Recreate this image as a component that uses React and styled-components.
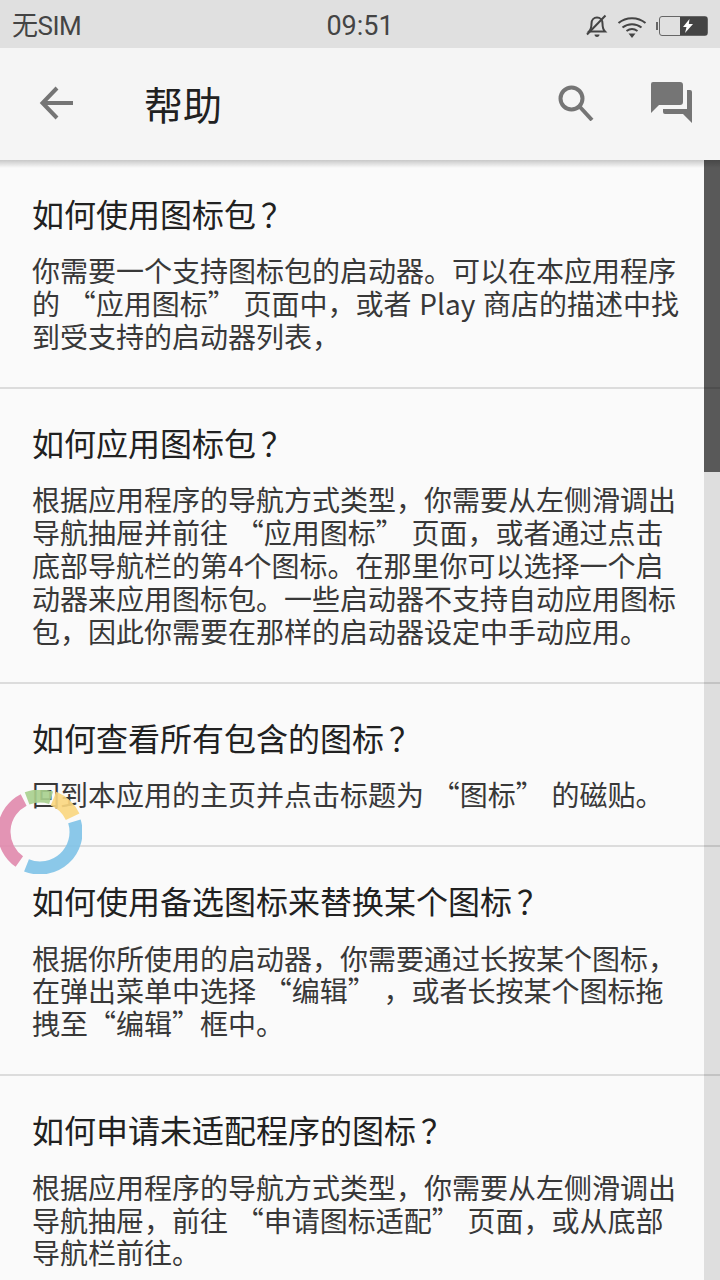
import React from "react";
import styled, { createGlobalStyle } from "styled-components";

const faqs = [
  {
    title: "如何使用图标包",
    lines: [
      "你需要一个支持图标包的启动器。可以在本应用程序",
      "的 “应用图标” 页面中，或者 Play 商店的描述中找",
      "到受支持的启动器列表，",
    ],
  },
  {
    title: "如何应用图标包",
    lines: [
      "根据应用程序的导航方式类型，你需要从左侧滑调出",
      "导航抽屉并前往 “应用图标” 页面，或者通过点击",
      "底部导航栏的第4个图标。在那里你可以选择一个启",
      "动器来应用图标包。一些启动器不支持自动应用图标",
      "包，因此你需要在那样的启动器设定中手动应用。",
    ],
  },
  {
    title: "如何查看所有包含的图标",
    lines: ["回到本应用的主页并点击标题为 “图标” 的磁贴。"],
  },
  {
    title: "如何使用备选图标来替换某个图标",
    lines: [
      "根据你所使用的启动器，你需要通过长按某个图标，",
      "在弹出菜单中选择 “编辑” ，或者长按某个图标拖",
      "拽至“编辑”框中。",
    ],
  },
  {
    title: "如何申请未适配程序的图标",
    lines: [
      "根据应用程序的导航方式类型，你需要从左侧滑调出",
      "导航抽屉，前往 “申请图标适配” 页面，或从底部",
      "导航栏前往。",
    ],
  },
];

// ring segments, angles clockwise from 12 o'clock
const ringArcs = [
  { from: 215, to: 333, color: "#e189ad", width: 13 },
  { from: 339, to: 378, color: "#a9d08e", width: 13 },
  { from: 382, to: 425, color: "#fbd77f", width: 15 },
  { from: 433, to: 562, color: "#7fc3e8", width: 13 },
];

function arcPath(from, to) {
  const point = (deg) => {
    const rad = (deg * Math.PI) / 180;
    return `${(42 + 36 * Math.sin(rad)).toFixed(2)} ${(42 - 36 * Math.cos(rad)).toFixed(2)}`;
  };
  return `M${point(from)}A36 36 0 ${to - from > 180 ? 1 : 0} 1 ${point(to)}`;
}

export default function App() {
  return (
    <Screen lang="zh-CN">
      <GlobalStyle />
      <StatusBar>
        <Carrier>无SIM</Carrier>
        <Clock>09:51</Clock>
        <StatusIcons>
          <svg width="22" height="24" viewBox="0 0 22 24" fill="none" stroke="#444" strokeWidth="2">
            <path d="M3 17.500c2-2 2.500-3.500 2.500-8 0-3.500 2.300-6 5.500-6s5.500 2.500 5.500 6c0 4.500.5 6 2.500 8z" />
            <path d="M8.500 20.500h5c0 1.500-1 2.500-2.500 2.500s-2.500-1-2.500-2.500z" fill="#444" stroke="none" />
            <path d="M1 20.500 19.500 1.500" strokeWidth="2" />
          </svg>
          <svg width="30" height="24" viewBox="0 0 30 24" fill="none" stroke="#444" strokeWidth="2">
            <path d="M1.500 9C9 2.500 21 2.500 28.500 9" />
            <path d="M5.500 13.500c5.500-4.500 13.500-4.500 19 0" />
            <path d="M9.500 17c3.300-2.400 7.700-2.400 11 0" />
            <path d="M11.500 19.500h7L15 24z" fill="#444" stroke="none" />
          </svg>
          <BatteryCap />
          <Battery>
            <BatteryLevel>
              <svg width="10" height="14" viewBox="0 0 10 14" fill="#fff">
                <path d="M6.500 0 0 8h3.500L2 14l8-9H5.800z" />
              </svg>
            </BatteryLevel>
          </Battery>
        </StatusIcons>
      </StatusBar>
      <Toolbar>
        <BackButton aria-label="返回">
          <svg width="34" height="34" viewBox="0 0 34 34" fill="none" stroke="#757575" strokeWidth="4">
            <path d="M34 17H4M18 2 3.500 17 18 32" />
          </svg>
        </BackButton>
        <Title>帮助</Title>
        <SearchButton aria-label="搜索">
          <svg width="36" height="36" viewBox="0 0 36 36" fill="none" stroke="#757575" strokeWidth="4">
            <circle cx="13.500" cy="13.500" r="11" />
            <path d="M21.500 21.500 34 35" />
          </svg>
        </SearchButton>
        <ChatButton aria-label="反馈">
          <svg width="42" height="42" viewBox="0 0 42 42" fill="#757575">
            <path d="M2 0h27a3 3 0 0 1 3 3v17a3 3 0 0 1-3 3H8l-8 8V2a2 2 0 0 1 2-2z" />
            <path d="M36 8h3a2 2 0 0 1 2 2v31l-9-9H14a2 2 0 0 1-2-2v-3h24z" />
          </svg>
        </ChatButton>
      </Toolbar>
      <Body>
        {faqs.map((faq) => (
          <Item key={faq.title}>
            <Question>
              {faq.title}
              <QuestionMark>？</QuestionMark>
            </Question>
            <Answer>
              {faq.lines.map((line) => (
                <Line key={line}>{line}</Line>
              ))}
            </Answer>
          </Item>
        ))}
        <ScrollTrack>
          <ScrollThumb />
        </ScrollTrack>
        <ToolbarShadow />
        <FloatingRing width="84" height="84" viewBox="0 0 84 84" fill="none">
          {ringArcs.map((arc) => (
            <path key={arc.color} d={arcPath(arc.from, arc.to)} stroke={arc.color} strokeWidth={arc.width} />
          ))}
        </FloatingRing>
      </Body>
    </Screen>
  );
}

const GlobalStyle = createGlobalStyle`
  html, body {
    margin: 0;
    padding: 0;
    background: #fafafa;
  }
`;

const Screen = styled.div`
  width: 720px;
  height: 1280px;
  display: flex;
  flex-direction: column;
  overflow: hidden;
  font-family: "Noto Sans CJK SC", "Liberation Sans", sans-serif;
  text-spacing-trim: space-all;
  background-color: #fafafa;
`;

const StatusBar = styled.div`
  height: 48px;
  flex: none;
  display: grid;
  grid-template-columns: 1fr auto 1fr;
  align-items: center;
  padding: 0 12px;
  box-sizing: border-box;
  background-color: #e0e0e0;
  color: #444444;
`;

const Carrier = styled.div`
  font-size: 26px;
  letter-spacing: -0.5px;
  line-height: 50px;
  height: 50px;
  font-family: "Roboto", "Noto Sans CJK SC", sans-serif;
`;

const Clock = styled.div`
  font-size: 27px;
  line-height: 52px;
  height: 52px;
  font-family: "Roboto", sans-serif;
`;

const StatusIcons = styled.div`
  display: flex;
  align-items: center;
  justify-content: flex-end;
  gap: 9px;
`;

const BatteryCap = styled.div`
  width: 2px;
  height: 8px;
  margin-right: -8px;
  background-color: #666666;
`;

const Battery = styled.div`
  width: 47px;
  height: 18px;
  display: flex;
  justify-content: flex-end;
  padding: 0;
  border: 1px solid #666666;
  border-radius: 3px;
`;

const BatteryLevel = styled.div`
  width: 27px;
  display: flex;
  align-items: center;
  padding-left: 3px;
  box-sizing: border-box;
  background-color: #444444;
`;

const Toolbar = styled.div`
  position: relative;
  z-index: 2;
  height: 112px;
  flex: none;
  display: flex;
  align-items: center;
  box-sizing: border-box;
  background-color: #f5f5f5;
`;

const IconButton = styled.div`
  display: flex;
  align-items: center;
  justify-content: center;
`;

const BackButton = styled(IconButton)`
  width: 34px;
  margin-left: 39px;
  margin-top: -2px;
`;

const Title = styled.div`
  flex: 1;
  margin-left: 71px;
  margin-top: -2px;
  font-size: 39px;
  line-height: 48px;
  color: #212121;
`;

const SearchButton = styled(IconButton)`
  width: 36px;
  margin-right: 57px;
  margin-top: -2px;
`;

const ChatButton = styled(IconButton)`
  width: 42px;
  margin-right: 27px;
  margin-top: -2px;
`;

const Body = styled.div`
  position: relative;
  flex: 1;
  min-height: 0;
`;

const Item = styled.div`
  padding: 33px 0 34.300px 32px;
  border-bottom: 2px solid #dcdcdc;
`;

const Question = styled.div`
  font-size: 32px;
  line-height: 40px;
  color: #212121;
  white-space: nowrap;
`;

const QuestionMark = styled.span`
  margin-left: 5px;
`;

const Answer = styled.div`
  margin-top: 21.400px;
  font-size: 28px;
  line-height: 32.800px;
  word-spacing: 1.500px;
  color: #383838;
`;

const Line = styled.div`
  white-space: nowrap;
`;

const ScrollTrack = styled.div`
  position: absolute;
  top: 0;
  right: 0;
  bottom: 0;
  width: 16px;
  background-color: rgba(0, 0, 0, 0.11);
`;

const ScrollThumb = styled.div`
  height: 312px;
  background-color: rgba(0, 0, 0, 0.6);
`;

const ToolbarShadow = styled.div`
  position: absolute;
  left: 0;
  right: 0;
  top: 0;
  height: 8px;
  background: linear-gradient(rgba(0, 0, 0, 0.2), rgba(0, 0, 0, 0));
`;

const FloatingRing = styled.svg`
  position: absolute;
  left: -2px;
  top: 630px;
  opacity: 0.9;
`;
